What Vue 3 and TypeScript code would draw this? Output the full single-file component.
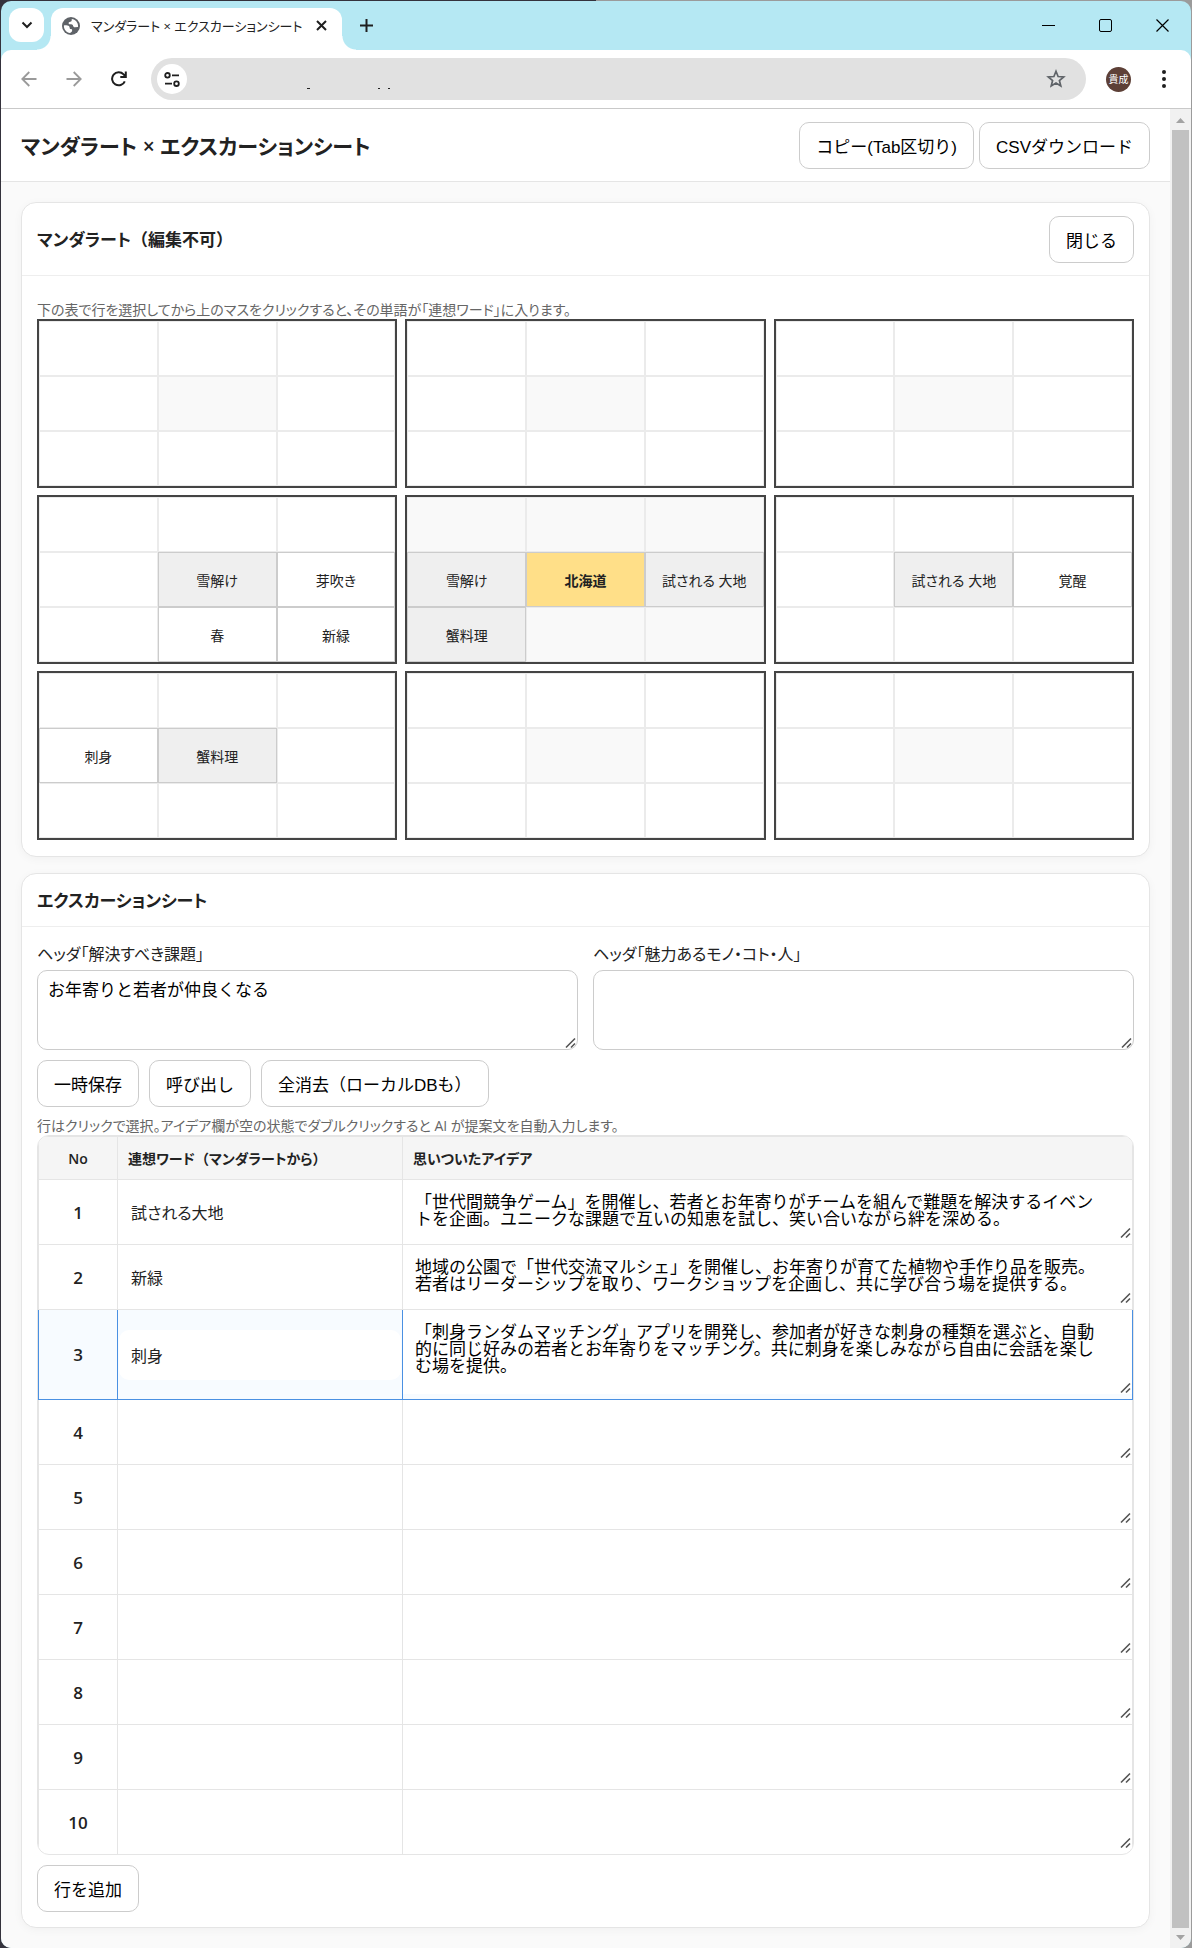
<script setup lang="ts">
import { ref } from 'vue'

interface IdeaRow {
  no: number
  word: string
  idea: string
}

const pageTitle = 'マンダラート × エクスカーションシート'

const blocks: string[][] = [
  ['', '', '', '', '', '', '', '', ''],
  ['', '', '', '', '', '', '', '', ''],
  ['', '', '', '', '', '', '', '', ''],
  ['', '', '', '', '雪解け', '芽吹き', '', '春', '新緑'],
  ['', '', '', '雪解け', '北海道', '試される 大地', '蟹料理', '', ''],
  ['', '', '', '', '試される 大地', '覚醒', '', '', ''],
  ['', '', '', '刺身', '蟹料理', '', '', '', ''],
  ['', '', '', '', '', '', '', '', ''],
  ['', '', '', '', '', '', '', '', ''],
]

const issue = ref('お年寄りと若者が仲良くなる')
const charm = ref('')
const open = ref(true)
const selected = ref(3)

const rows = ref<IdeaRow[]>([
  {
    no: 1,
    word: '試される大地',
    idea: '「世代間競争ゲーム」を開催し、若者とお年寄りがチームを組んで難題を解決するイベントを企画。ユニークな課題で互いの知恵を試し、笑い合いながら絆を深める。',
  },
  {
    no: 2,
    word: '新緑',
    idea: '地域の公園で「世代交流マルシェ」を開催し、お年寄りが育てた植物や手作り品を販売。若者はリーダーシップを取り、ワークショップを企画し、共に学び合う場を提供する。',
  },
  {
    no: 3,
    word: '刺身',
    idea: '「刺身ランダムマッチング」アプリを開発し、参加者が好きな刺身の種類を選ぶと、自動的に同じ好みの若者とお年寄りをマッチング。共に刺身を楽しみながら自由に会話を楽しむ場を提供。',
  },
  ...[4, 5, 6, 7, 8, 9, 10].map((no) => ({ no, word: '', idea: '' })),
])

function cellClass(block: number, cell: number, word: string) {
  const head = block === 4 || cell === 4
  return {
    filled: word !== '',
    head,
    theme: block === 4 && cell === 4,
  }
}

function pick(word: string) {
  const row = rows.value.find((r) => r.no === selected.value)
  if (row && word) row.word = word
}

function addRow() {
  rows.value.push({ no: rows.value.length + 1, word: '', idea: '' })
}
</script>

<template>
  <div class="desktop">
    <div class="window">
      <div class="tabstrip">
        <button class="tab-search" aria-label="タブを検索">
          <svg width="12" height="8" viewBox="0 0 12 8"><path d="M1.5 1.5 6 6l4.500-4.500" fill="none" stroke="#1f1f1f" stroke-width="2" /></svg>
        </button>
        <div class="tab">
          <svg class="globe" width="18" height="18" viewBox="0 0 18 18">
            <circle cx="9" cy="9" r="9" fill="#5f6368" />
            <path d="M9.800 1.900c-.2 1.300.2 1.900-.7 2.500-1 .6-2.300.3-2.500 1.500-.1.900.6 1.300 1.400 1.300 1.500 0 2.900.2 3.200 1.700.2 1 .9 1.400 1.900 1.300l2.900-.3c.1-.3.100-.6.100-.9 0-3.500-2.700-6.800-6.300-7.100z" fill="#fff" />
            <path d="M1.900 8.500c.8-.3 2.300-.2 3.500.1 1.600.3 2.200 1.200 2.300 2.300 0 .9.600 1.100 1.400 1.200.9.200 1.200.7 1 1.600-.2 1-.9 1.500-2.100 2.300-3.600-.4-6.300-3.700-6.100-7.500z" fill="#fff" />
          </svg>
          <span class="tab-title">{{ pageTitle }}</span>
          <button class="icon-btn" aria-label="タブを閉じる">
            <svg width="11" height="11" viewBox="0 0 11 11"><path d="m1 1 9 9M10 1l-9 9" fill="none" stroke="#1f1f1f" stroke-width="2" /></svg>
          </button>
        </div>
        <button class="icon-btn new-tab" aria-label="新しいタブ">
          <svg width="13" height="13" viewBox="0 0 13 13"><path d="M6.500 0v13M0 6.500h13" fill="none" stroke="#1f1f1f" stroke-width="2" /></svg>
        </button>
        <div class="window-controls">
          <button class="icon-btn" aria-label="最小化">
            <svg width="14" height="14" viewBox="0 0 14 14"><path d="M0 6.500h13" stroke="#000" /></svg>
          </button>
          <button class="icon-btn" aria-label="最大化">
            <svg width="14" height="14" viewBox="0 0 14 14"><rect x=".5" y=".5" width="12" height="12" rx="1.500" fill="none" stroke="#000" /></svg>
          </button>
          <button class="icon-btn" aria-label="閉じる">
            <svg width="14" height="14" viewBox="0 0 14 14"><path d="m.5.5 12 12m0-12-12 12" fill="none" stroke="#000" stroke-width="1.200" /></svg>
          </button>
        </div>
      </div>

      <div class="toolbar">
        <div class="nav">
          <button class="icon-btn" aria-label="戻る">
            <svg width="16" height="16" viewBox="0 0 16 16"><path d="M15.500 8H1.500M8.300 1 1.300 8l7 7" fill="none" stroke="#9a9a9a" stroke-width="1.800" /></svg>
          </button>
          <button class="icon-btn" aria-label="進む">
            <svg width="16" height="16" viewBox="0 0 16 16"><path d="M.5 8h14M7.700 1l7 7-7 7" fill="none" stroke="#9a9a9a" stroke-width="1.800" /></svg>
          </button>
          <button class="icon-btn" aria-label="再読み込み">
            <svg width="16" height="16" viewBox="0 0 16 16"><path d="M13.800 10.300A6.600 6.600 0 1 1 12.600 3.300L14.500 5.500M14.800.5v5.500H9.300" fill="none" stroke="#1f1f1f" stroke-width="2" /></svg>
          </button>
        </div>
        <div class="omnibox">
          <button class="site-info" aria-label="サイト情報">
            <svg width="16" height="15" viewBox="0 0 16 15">
              <g fill="none" stroke="#1f1f1f" stroke-width="1.800">
                <circle cx="3.500" cy="3.300" r="2.300" /><path d="M8 3.300h7" />
                <circle cx="12.500" cy="11.700" r="2.300" /><path d="M1 11.700h7" />
              </g>
            </svg>
          </button>
          <svg class="marks" width="84" height="2" viewBox="0 0 84 2"><path d="M0 .5h3M71 .5h2M81 .5h2" stroke="#222" /></svg>
          <input class="address" type="text" aria-label="アドレスバー" />
          <button class="icon-btn" aria-label="ブックマーク">
            <svg width="20" height="20" viewBox="0 0 20 20"><path d="m10 2.300 2.100 5.200 5.600.4-4.300 3.600 1.400 5.500-4.800-3-4.800 3 1.400-5.500-4.300-3.600 5.600-.4z" fill="none" stroke="#5f6368" stroke-width="1.700" /></svg>
          </button>
        </div>
        <button class="avatar">貴成</button>
        <button class="icon-btn menu" aria-label="メニュー">
          <svg width="4" height="18" viewBox="0 0 4 18"><g fill="#1f1f1f"><circle cx="2" cy="2" r="2" /><circle cx="2" cy="9" r="2" /><circle cx="2" cy="16" r="2" /></g></svg>
        </button>
      </div>

      <div class="viewport">
        <div class="page">
          <header class="page-head">
            <h1>{{ pageTitle }}</h1>
            <div class="head-actions">
              <button class="btn">コピー(Tab区切り)</button>
              <button class="btn">CSVダウンロード</button>
            </div>
          </header>

          <main>
            <section class="card">
              <div class="card-head">
                <h2>マンダラート<span class="full">（編集不可）</span></h2>
                <button class="btn" @click="open = !open">{{ open ? '閉じる' : '開く' }}</button>
              </div>
              <div v-show="open" class="card-body">
                <p class="hint">下の表で行を選択してから上のマスをクリックすると、その単語が「連想ワード」に入ります。</p>
                <div class="mandala">
                  <div v-for="(block, b) in blocks" :key="b" class="block">
                    <button
                      v-for="(word, c) in block"
                      :key="c"
                      class="cell"
                      :class="cellClass(b, c, word)"
                      @click="pick(word)"
                    >{{ word }}</button>
                  </div>
                </div>
              </div>
            </section>

            <section class="card">
              <div class="card-head">
                <h2>エクスカーションシート</h2>
              </div>
              <div class="card-body">
                <div class="fields">
                  <div class="field">
                    <label for="issue">ヘッダ「解決すべき課題」</label>
                    <textarea id="issue" v-model="issue"></textarea>
                  </div>
                  <div class="field">
                    <label for="charm">ヘッダ「魅力あるモノ・コト・人」</label>
                    <textarea id="charm" v-model="charm"></textarea>
                  </div>
                </div>
                <div class="actions">
                  <button class="btn">一時保存</button>
                  <button class="btn">呼び出し</button>
                  <button class="btn">全消去（ローカルDBも）</button>
                </div>
                <p class="hint">行はクリックで選択。アイデア欄が空の状態でダブルクリックすると AI が提案文を自動入力します。</p>
                <div class="table-wrap">
                  <table>
                    <colgroup>
                      <col class="col-no" />
                      <col class="col-word" />
                      <col />
                    </colgroup>
                    <thead>
                      <tr>
                        <th class="no" scope="col">No</th>
                        <th scope="col">連想ワード<span class="full">（</span>マンダラートから<span class="full">）</span></th>
                        <th scope="col">思いついたアイデア</th>
                      </tr>
                    </thead>
                    <tbody>
                      <tr v-for="row in rows" :key="row.no" :class="{ selected: row.no === selected }" @click="selected = row.no">
                        <td class="no">{{ row.no }}</td>
                        <td><input v-model="row.word" class="word" type="text" :aria-label="`連想ワード ${row.no}`" /></td>
                        <td><textarea v-model="row.idea" class="idea" :class="{ tall: row.idea.length > 80 }" :aria-label="`アイデア ${row.no}`"></textarea></td>
                      </tr>
                    </tbody>
                  </table>
                </div>
                <div class="actions">
                  <button class="btn" @click="addRow">行を追加</button>
                </div>
              </div>
            </section>
          </main>
        </div>
        <div class="scrollbar" aria-hidden="true">
          <svg width="20" height="21" viewBox="0 0 20 21"><path d="m6 14 4.500-5 4.500 5z" fill="#a3a3a3" /></svg>
          <div class="thumb"></div>
          <svg width="20" height="20" viewBox="0 0 20 20"><path d="m6 7 4.500 5L15 7z" fill="#a3a3a3" /></svg>
        </div>
      </div>
    </div>
  </div>
</template>

<style>
body {
  background: #9b9b9b;
}
</style>

<style scoped>
* {
  box-sizing: border-box;
}

.desktop {
  min-height: 100vh;
  padding: 1px;
  display: flex;
  background: linear-gradient(90deg, #34323c 50%, #9b9b9b 50%);
  font-family: "Open Sans", "Noto Sans CJK JP", sans-serif;
  font-size: 17px;
  color: #222;
}

.window {
  flex: 1;
  min-width: 0;
  display: flex;
  flex-direction: column;
  border-radius: 10px;
  overflow: hidden;
  background: #b5e8f3;
}

button {
  margin: 0;
  padding: 0;
  border: 0;
  background: none;
  color: inherit;
  font: inherit;
}

svg {
  display: block;
  flex: none;
}

.icon-btn {
  display: flex;
  align-items: center;
  justify-content: center;
}

/* browser frame */
.tabstrip {
  display: flex;
  height: 49px;
  padding: 7px 21px 0 8px;
}

.tab-search {
  display: flex;
  align-items: center;
  justify-content: center;
  width: 35px;
  height: 34px;
  margin-right: 7px;
  border-radius: 12px;
  background: #fff;
}

.tab {
  position: relative;
  display: flex;
  align-items: center;
  width: 291px;
  height: 42px;
  padding: 0 15px 7px 11px;
  border-radius: 12px 12px 0 0;
  background: #fff;
}

.tab::before,
.tab::after {
  content: "";
  position: absolute;
  bottom: 0;
  width: 14px;
  height: 14px;
}

.tab::before {
  right: 100%;
  background: radial-gradient(circle at 0 0, transparent 13px, #fff 14px);
}

.tab::after {
  left: 100%;
  background: radial-gradient(circle at 100% 0, transparent 13px, #fff 14px);
}

.tab-title {
  flex: 1;
  margin-left: 11px;
  font-size: 13px;
  line-height: 20px;
  white-space: nowrap;
  font-feature-settings: "palt";
}

.new-tab {
  width: 48px;
  height: 34px;
}

.window-controls {
  display: flex;
  gap: 43px;
  height: 36px;
  margin-left: auto;
}

.toolbar {
  display: flex;
  align-items: center;
  height: 59px;
  padding: 0 25px 0 20px;
  border-bottom: 1px solid #c9c9c9;
  border-radius: 10px 10px 0 0;
  background: #fff;
}

.nav {
  display: flex;
  gap: 29px;
  margin-right: 24px;
}

.omnibox {
  flex: 1;
  display: flex;
  align-items: center;
  height: 42px;
  padding: 0 20px 0 6px;
  border-radius: 21px;
  background: #e1e1e1;
}

.site-info {
  display: flex;
  align-items: center;
  justify-content: center;
  width: 30px;
  height: 30px;
  border-radius: 50%;
  background: #fff;
}

.marks {
  margin: 20px 0 0 120px;
}

.address {
  flex: 1;
  min-width: 0;
  border: 0;
  outline: 0;
  background: transparent;
  font: inherit;
}

.avatar {
  width: 25px;
  height: 25px;
  margin: 0 31px 0 20px;
  border-radius: 50%;
  background: #5d4037;
  color: #fff;
  font-size: 10px;
  line-height: 25px;
}

.viewport {
  flex: 1;
  display: flex;
}

.page {
  flex: 1;
  min-width: 0;
  background: #fafafa;
}

.scrollbar {
  display: flex;
  flex-direction: column;
  width: 21px;
  background: #f1f1f1;
}

.thumb {
  flex: 1;
  margin: 0 2px;
  background: #c1c1c1;
}

/* page */
.page-head {
  display: flex;
  align-items: center;
  justify-content: space-between;
  padding: 13px 20px 12px;
  border-bottom: 1px solid #e5e5e5;
  background: #fff;
}

h1,
h2,
p {
  margin: 0;
}

h1 {
  font-size: 21px;
  line-height: 30px;
  font-weight: 600;
  font-feature-settings: "palt";
}

h2 {
  font-size: 17px;
  line-height: 27px;
  font-weight: 600;
  font-feature-settings: "palt";
}

/* full-width brackets inside proportional kana */
.full {
  font-feature-settings: normal;
}

.head-actions {
  display: flex;
  gap: 5px;
}

.btn {
  height: 47px;
  padding: 0 16px;
  border: 1px solid #ccc;
  border-radius: 10px;
  background: #fff;
  color: #000;
  font-family: "Liberation Sans", "Noto Sans CJK JP", sans-serif;
  font-size: 17px;
  white-space: nowrap;
}

main {
  display: flex;
  flex-direction: column;
  gap: 16px;
  padding: 20px;
}

.card {
  border: 1px solid #e5e5e5;
  border-radius: 15px;
  background: #fff;
  box-shadow: 0 2px 10px rgba(0, 0, 0, 0.04);
}

.card-head {
  display: flex;
  align-items: center;
  justify-content: space-between;
  padding: 13px 15px 12px;
  border-bottom: 1px solid #eee;
}

.card-body {
  padding: 15px;
}

.hint {
  margin-top: 10px;
  color: #666;
  font-size: 14px;
  line-height: 18px;
  font-feature-settings: "palt";
}

.mandala {
  display: grid;
  grid-template-columns: repeat(3, 1fr);
  gap: 7px 8px;
  padding-bottom: 1px;
}

.block {
  display: grid;
  grid-template-columns: repeat(3, 1fr);
  grid-auto-rows: 55px;
  border: 2px solid #444;
}

.cell {
  min-width: 0;
  border: 1px solid #ebebeb;
  background: #fff;
  font-size: 14px;
  font-feature-settings: "palt";
}

.cell.head {
  background: #f9f9f9;
}

.cell.filled {
  border-color: #ccc;
}

.cell.head.filled {
  background: #efefef;
}

.cell.theme.filled {
  background: #ffdf88;
  font-weight: 700;
}

.fields {
  display: grid;
  grid-template-columns: 1fr 1fr;
  gap: 15px;
}

.field {
  display: flex;
  flex-direction: column;
  gap: 4px;
}

label {
  font-size: 16px;
  line-height: 24px;
  font-feature-settings: "palt";
}

textarea {
  display: block;
  width: 100%;
  color: #000;
  background: #fff;
  resize: vertical;
  outline: 0;
}

textarea::-webkit-resizer {
  background: url("data:image/svg+xml,%3Csvg xmlns='http://www.w3.org/2000/svg' width='15' height='15'%3E%3Cpath d='M4 13.500 13 4.500M9 13.500 13 9.500' stroke='%23555' stroke-width='1.600' fill='none'/%3E%3C/svg%3E") no-repeat right bottom;
}

.field textarea {
  height: 80px;
  padding: 8px 10px;
  border: 1px solid #ccc;
  border-radius: 10px;
  font: 17px/20px "Noto Sans CJK JP", sans-serif;
}

.actions {
  display: flex;
  gap: 10px;
  margin-top: 10px;
}

.table-wrap {
  border: 1px solid #e5e5e5;
  border-radius: 12px;
  overflow: hidden;
}

table {
  width: 100%;
  table-layout: fixed;
  border-collapse: separate;
  border-spacing: 0;
}

.col-no {
  width: 80px;
}

.col-word {
  width: 285px;
}

th,
td {
  border-right: 1px solid #e5e5e5;
  border-bottom: 1px solid #e5e5e5;
}

th:first-child,
td:first-child {
  border-left: 1px solid #e5e5e5;
}

th {
  height: 44px;
  padding: 0 10px;
  border-top: 1px solid #e5e5e5;
  background: #f5f5f5;
  font-size: 14px;
  font-weight: 600;
  text-align: left;
  font-feature-settings: "palt";
}

td {
  height: 65px;
  padding: 0;
}

tbody tr:last-child td {
  height: 64px;
  border-bottom: 0;
}

.no {
  text-align: center;
}

td.no {
  font-weight: 600;
}

.selected td {
  border-color: #4a90e2;
  background: #f7fbff;
}

.word {
  display: block;
  width: calc(100% - 2px);
  height: 50px;
  margin: 0 1px;
  padding: 0 12px;
  border: 0;
  border-radius: 10px;
  outline: 0;
  background: #fff;
  color: #222;
  font-family: inherit;
  font-size: 16px;
  font-feature-settings: "palt";
}

.idea {
  height: 59px;
  margin-bottom: 5px;
  padding: 12px 26px 0 12px;
  border: 0;
  overflow: hidden;
  font: 17px/17px "Noto Sans CJK JP", sans-serif;
}

.idea.tall {
  height: 84px;
}
</style>
